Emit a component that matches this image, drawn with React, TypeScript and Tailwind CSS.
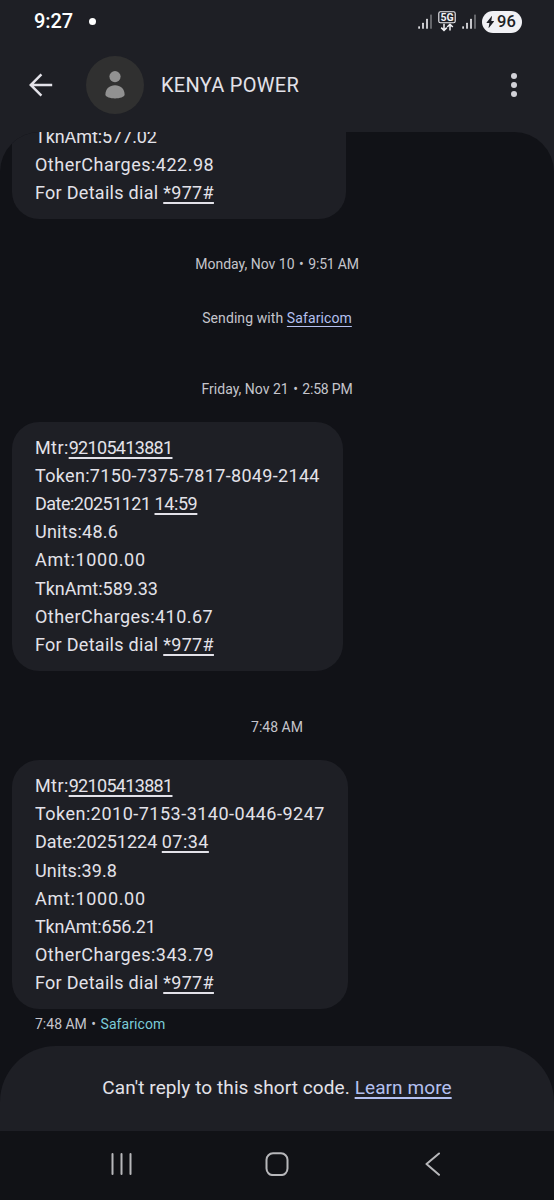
import React from "react";

const underline = "underline decoration-[1.5px] underline-offset-[3px] [text-decoration-skip-ink:none]";

type Line = {
  text: string;
  link?: string;
  tracking?: string;
  linkTracking?: string;
};

const detailsLine: Line = {
  text: "For Details dial ",
  link: "*977#",
  tracking: "tracking-[0.29px]",
  linkTracking: "tracking-[0.3px]",
};

const meterLine: Line = {
  text: "Mtr:",
  link: "92105413881",
  tracking: "tracking-[0.4px]",
  linkTracking: "tracking-[-0.68px]",
};

const previousMessage: Line[] = [
  { text: "TknAmt:577.02", tracking: "tracking-[-0.08px]" },
  { text: "OtherCharges:422.98", tracking: "tracking-[0.49px]" },
  detailsLine,
];

const novemberMessage: Line[] = [
  meterLine,
  { text: "Token:7150-7375-7817-8049-2144", tracking: "tracking-[0.32px]" },
  { text: "Date:20251121 ", link: "14:59", tracking: "tracking-[-0.52px]", linkTracking: "tracking-[-0.4px]" },
  { text: "Units:48.6", tracking: "tracking-[0.25px]" },
  { text: "Amt:1000.00", tracking: "tracking-[0.68px]" },
  { text: "TknAmt:589.33" },
  { text: "OtherCharges:410.67", tracking: "tracking-[0.43px]" },
  detailsLine,
];

const decemberMessage: Line[] = [
  meterLine,
  { text: "Token:2010-7153-3140-0446-9247", tracking: "tracking-[0.49px]" },
  { text: "Date:20251224 ", link: "07:34", linkTracking: "tracking-[0.45px]" },
  { text: "Units:39.8", tracking: "tracking-[0.15px]" },
  { text: "Amt:1000.00", tracking: "tracking-[0.68px]" },
  { text: "TknAmt:656.21", tracking: "tracking-[-0.17px]" },
  { text: "OtherCharges:343.79", tracking: "tracking-[0.49px]" },
  detailsLine,
];

function Bubble({ lines, className }: { lines: Line[]; className: string }) {
  return (
    <div className={`ml-3 bg-[#1e1f25] pl-[23px] text-[18px] leading-[28.2px] text-[#e3e2e9] ${className}`}>
      {lines.map((line, i) => (
        <p key={i} className="whitespace-pre">
          <span className={line.tracking}>{line.text}</span>
          {line.link && <a className={`${underline} ${line.linkTracking ?? ""}`}>{line.link}</a>}
        </p>
      ))}
    </div>
  );
}

function Timestamp({ day, time, className }: { day: string; time: string; className: string }) {
  return (
    <p className={`text-center leading-5 ${className}`}>
      {day} <span className="mx-px">•</span> <span className="tracking-[-0.2px]">{time}</span>
    </p>
  );
}

function SignalBars() {
  return (
    <svg width="15" height="16" viewBox="0 0 15 16" fill="#f1f1f5">
      <rect x="0.3" y="12.2" width="1.6" height="2.5" rx="0.5" />
      <rect x="4.2" y="8.8" width="1.6" height="5.9" rx="0.5" />
      <rect x="8.2" y="4.8" width="1.6" height="9.9" rx="0.5" />
      <rect x="12.2" y="0.6" width="1.6" height="14.1" rx="0.5" fill="#77787d" />
    </svg>
  );
}

function FiveG() {
  return (
    <svg width="18" height="21" viewBox="0 0 18 21" fill="none" stroke="#f1f1f5">
      <rect x="0.8" y="0.8" width="16.4" height="11" rx="1.6" strokeWidth="1.1" />
      <text x="9" y="10" textAnchor="middle" fontSize="10.5" fontWeight="700" fill="#f1f1f5" stroke="none" fontFamily="Roboto, sans-serif">
        5G
      </text>
      <path d="M6 12.800v6.400M3.200 16.600 6 19.400l2.800-2.800M12 19.600v-6M9.200 16l2.800-2.800 2.800 2.800" strokeWidth="1.5" />
    </svg>
  );
}

function StatusBar() {
  return (
    <div className="flex h-[43px] items-center pl-[34px] pr-8 text-white">
      <span className="pb-[2px] text-[20px] font-medium tracking-[-0.1px]">9:27</span>
      <span className="ml-4 size-[7px] rounded-full bg-white" />
      <div className="ml-auto flex items-center">
        <SignalBars />
        <span className="ml-[5px]"><FiveG /></span>
        <span className="ml-[6px]"><SignalBars /></span>
        <span className="ml-[5px] flex h-[22px] w-10 items-center rounded-full bg-[#f1f1f5] pl-[4px] text-[#1e1f25]">
          <svg width="9" height="12" viewBox="0 0 9 12" fill="#1e1f25">
            <path d="M5.600.200.600 6.400c-.2.3 0 .6.3.6h2.500l-.8 4.600c0 .3.2.4.4.1l5-6.200c.2-.3 0-.6-.3-.6H5.300L6 .3c0-.3-.2-.3-.4-.1Z" />
          </svg>
          <span className="ml-[2px] pt-[2px] text-[16.5px] font-medium leading-none">96</span>
        </span>
      </div>
    </div>
  );
}

function AppBar() {
  return (
    <div className="flex h-[89px] items-center pb-[5px] pl-[29px] pr-[37px] text-[#e3e2e9]">
      <svg width="24" height="24" viewBox="0 0 24 24" fill="none" stroke="#e3e2e9" strokeWidth="2.5">
        <path d="M23.200 12H2M12.400 1.300 1.700 12l10.700 10.700" />
      </svg>
      <div className="ml-[33px] flex size-[58px] items-center justify-center rounded-full bg-[#303030]">
        <svg width="20" height="28" viewBox="0 0 20 28" fill="#919191">
          <circle cx="10" cy="5.6" r="5.6" />
          <path d="M.4 23.500C.4 17.900 4.500 14.300 10 14.300s9.600 3.600 9.600 9.200c0 2.500-5 3.900-9.600 3.900S.4 26 .4 23.500Z" />
        </svg>
      </div>
      <h1 className="ml-[17px] pb-px text-[20px] tracking-[0.3px]">KENYA POWER</h1>
      <div className="ml-auto flex flex-col gap-[3px]">
        <span className="size-[6px] rounded-full bg-[#d2d2d8]" />
        <span className="size-[6px] rounded-full bg-[#d2d2d8]" />
        <span className="size-[6px] rounded-full bg-[#d2d2d8]" />
      </div>
    </div>
  );
}

function Thread() {
  return (
    <main className="h-[914px] overflow-hidden rounded-t-[40px] bg-[#111217] text-[14px] text-[#c5c5cc]">
      <Bubble lines={previousMessage} className="-mt-[9px] h-[96px] w-[334px] rounded-b-[27px]" />
      <Timestamp day="Monday, Nov 10" time="9:51 AM" className="mt-[34.5px]" />
      <p className="mt-[34px] text-center leading-5 tracking-[0.09px]">
        Sending with <a className="text-[#b4c0f0] underline underline-offset-[3px]">Safaricom</a>
      </p>
      <Timestamp day="Friday, Nov 21" time="2:58 PM" className="mt-[51px]" />
      <Bubble lines={novemberMessage} className="mt-[23px] h-[249px] w-[331px] rounded-[27px] pt-[12px]" />
      <p className="mt-[46.5px] text-center leading-5">7:48 AM</p>
      <Bubble lines={decemberMessage} className="mt-[23px] h-[249px] w-[336px] rounded-[27px] pt-[12px]" />
      <p className="ml-[35px] mt-[5px] leading-5">
        7:48 AM <span className="mx-px">•</span> <span className="tracking-[0.08px] text-[#7bcbd8]">Safaricom</span>
      </p>
    </main>
  );
}

function NavigationBar() {
  return (
    <nav className="flex h-[69px] items-center justify-between bg-[#111216] pb-[3px] pl-[110px] pr-[113px]">
      <svg width="24" height="24" viewBox="0 0 24 24" stroke="#b7b7ba" strokeWidth="2" strokeLinecap="round">
        <path d="M2.500 2v20M11.500 2v20M20.500 2v20" />
      </svg>
      <svg className="mr-[5px]" width="24" height="24" viewBox="0 0 24 24" fill="none" stroke="#b7b7ba" strokeWidth="2">
        <rect x="1.5" y="1.3" width="21" height="21.8" rx="6.5" />
      </svg>
      <svg width="16" height="24" viewBox="0 0 16 24" fill="none" stroke="#b7b7ba" strokeWidth="2" strokeLinecap="round" strokeLinejoin="round">
        <path d="M14 1.500 1.500 12 14 22.800" />
      </svg>
    </nav>
  );
}

export default function App() {
  return (
    <div className="h-[1200px] w-[554px] overflow-hidden bg-[#1e1f25] font-['Roboto',sans-serif]">
      <StatusBar />
      <AppBar />
      <Thread />
      <div className="bg-[#111217]">
        <footer className="flex h-[85px] items-center justify-center rounded-t-[56px] bg-[#1e1f25] text-[19px] tracking-[0.09px] text-[#e3e2e9]">
          <p>
            Can't reply to this short code. <a className={`text-[#b4c0f0] ${underline}`}>Learn more</a>
          </p>
        </footer>
      </div>
      <NavigationBar />
    </div>
  );
}
